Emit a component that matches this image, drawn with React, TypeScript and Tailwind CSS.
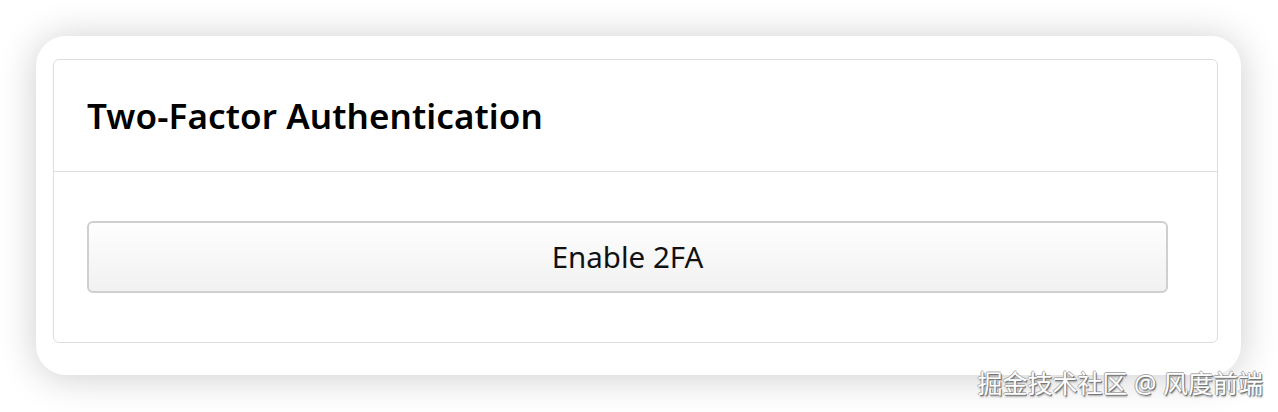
import React from 'react';

export default function App() {
  return (
    <div className="relative h-[412px] w-[1278px] overflow-hidden bg-white" style={{ fontFamily: '"Noto Sans", "Open Sans", sans-serif' }}>
      <div className="pl-[36px] pt-[36px]">
        <div className="w-[1205px] rounded-[30px] bg-white pb-[32px] pl-[17px] pr-[23px] pt-[23px] shadow-[0_2px_38px_rgba(0,0,0,0.2)]">
          <div className="rounded-[6px] border border-[#dedede]">
            <div className="flex h-[112px] items-center border-b border-[#dedede] pl-[33px]">
              <h2 className="pt-[2px] text-[35px] font-semibold tracking-[0.1px] text-black">Two-Factor Authentication</h2>
            </div>
            <div className="pb-[49px] pl-[33px] pr-[49px] pt-[49px]">
              <button className="flex h-[72px] w-full items-center justify-center rounded-[6px] border-2 border-[#cfcfcf] bg-gradient-to-b from-[#fefefe] to-[#f1f1f1] text-[29.5px] text-[#111]">
                Enable 2FA
              </button>
            </div>
          </div>
        </div>
      </div>
      <div
        className="absolute right-[15px] top-[366px] text-[25px] leading-[34px] text-white"
        style={{
          fontFamily: '"Noto Sans", "Noto Sans CJK SC", sans-serif',
          textShadow: '1px 1px 0 #777, -1px 0 0 #aaa, 0 -1px 0 #aaa, 1px 2px 2px rgba(0,0,0,0.35)',
        }}
      >
        掘金技术社区 @ 风度前端
      </div>
    </div>
  );
}
